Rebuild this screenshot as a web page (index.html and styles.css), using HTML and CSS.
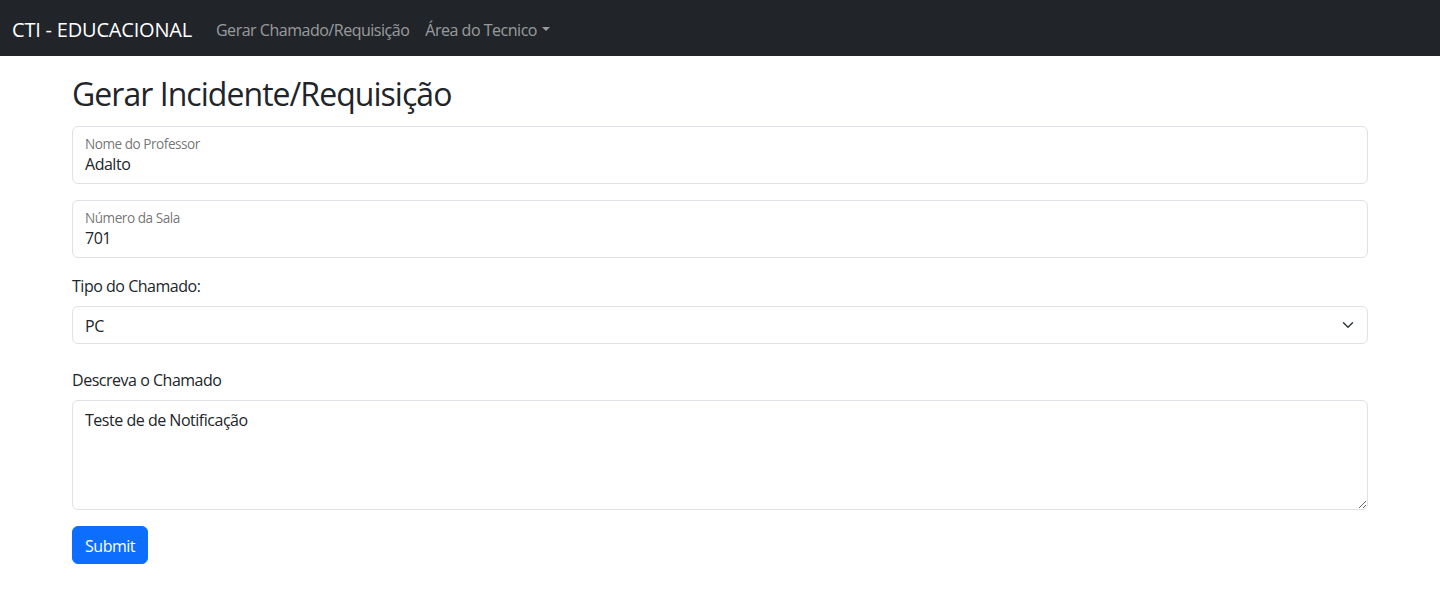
FILE: index.html
```html
<!DOCTYPE html>
<html lang="pt-BR">
<head>
<meta charset="utf-8">
<title>CTI - EDUCACIONAL</title>
<link rel="stylesheet" href="styles.css">
</head>
<body>
<nav class="navbar">
  <a class="brand" href="#">CTI - EDUCACIONAL</a>
  <ul class="nav">
    <li><a class="nav-link" href="#">Gerar Chamado/Requisição</a></li>
    <li><a class="nav-link dropdown" href="#">Área do Tecnico</a></li>
  </ul>
</nav>
<main class="container">
  <h2 class="title">Gerar Incidente/Requisição</h2>
  <form class="form">
    <div class="floating">
      <label class="float-label" for="nome">Nome do Professor</label>
      <input class="float-input" id="nome" type="text" value="Adalto">
    </div>
    <div class="floating">
      <label class="float-label" for="sala">Número da Sala</label>
      <input class="float-input" id="sala" type="text" value="701">
    </div>
    <label class="form-label" for="tipo">Tipo do Chamado:</label>
    <div class="select-wrap">
      <select class="form-select" id="tipo">
        <option>PC</option>
        <option>Projetor</option>
        <option>Rede</option>
      </select>
      <svg class="chevron" viewBox="0 0 16 16" width="16" height="12" aria-hidden="true"><path fill="none" stroke="#343a40" stroke-linecap="round" stroke-linejoin="round" stroke-width="2" d="m2 5 6 6 6-6"/></svg>
    </div>
    <label class="form-label desc-label" for="desc">Descreva o Chamado</label>
    <textarea class="form-control" id="desc" rows="3">Teste de de Notificação</textarea>
    <button class="btn" type="submit">Submit</button>
  </form>
</main>
</body>
</html>
```
FILE: styles.css
```css
* { box-sizing: border-box; }
body {
  margin: 0;
  font-family: "Open Sans", "Noto Sans", sans-serif;
  font-size: 16px;
  line-height: 1.5;
  letter-spacing: -0.03em;
  color: #212529;
  background: #fff;
}
.navbar {
  display: flex;
  align-items: center;
  height: 56px;
  padding: 3px 12px 0;
  background: #212529;
}
.brand {
  font-size: 20px;
  color: #fff;
  text-decoration: none;
  margin-right: 16px;
  line-height: 30px;
  letter-spacing: -0.01em;
}
.nav {
  display: flex;
  list-style: none;
  margin: 0;
  padding: 0;
}
.nav-link {
  display: block;
  padding: 8px;
  color: rgba(255,255,255,.55);
  text-decoration: none;
}
.dropdown::after {
  content: "";
  display: inline-block;
  margin-left: .3em;
  vertical-align: .255em;
  border-top: .3em solid;
  border-right: .3em solid transparent;
  border-left: .3em solid transparent;
}
.container {
  width: 1320px;
  margin: 0 auto;
  padding: 0 12px;
}
.title {
  font-size: 32px;
  font-weight: 400;
  line-height: 1.2;
  letter-spacing: -0.03em;
  margin: 19px 0 13px;
}
.form { display: flex; flex-direction: column; align-items: stretch; }
.floating {
  display: flex;
  flex-direction: column;
  height: 58px;
  padding: 9px 12px 7px;
  border: 1px solid #dee2e6;
  border-radius: 6px;
  margin-bottom: 16px;
}
.float-label {
  font-size: 13.6px;
  line-height: 16px;
  color: rgba(33,37,41,.65);
}
.float-input {
  border: 0;
  padding: 0;
  outline: none;
  font: inherit;
  letter-spacing: inherit;
  color: #212529;
  line-height: 24px;
  height: 24px;
  background: transparent;
}
.form-label {
  display: block;
  margin-bottom: 8px;
  padding-top: 1px;
  line-height: 23px;
}
.select-wrap {
  position: relative;
}
.form-select {
  display: block;
  width: 100%;
  height: 38px;
  padding: 7px 36px 5px 12px;
  font: inherit;
  letter-spacing: inherit;
  color: #212529;
  background: #fff;
  border: 1px solid #dee2e6;
  border-radius: 6px;
  appearance: none;
  -webkit-appearance: none;
}
.chevron {
  position: absolute;
  right: 12px;
  top: 13px;
  pointer-events: none;
}
.desc-label { margin-top: 24px; }
.form-control {
  display: block;
  width: 100%;
  height: 110px;
  padding: 7px 12px 5px;
  font: inherit;
  letter-spacing: inherit;
  color: #212529;
  border: 1px solid #dee2e6;
  border-radius: 6px;
  resize: vertical;
}
.btn {
  align-self: flex-start;
  margin-top: 16px;
  padding: 7px 12px 5px;
  font: inherit;
  letter-spacing: inherit;
  color: #fff;
  background: #0d6efd;
  border: 1px solid #0d6efd;
  border-radius: 6px;
  cursor: pointer;
}
```
